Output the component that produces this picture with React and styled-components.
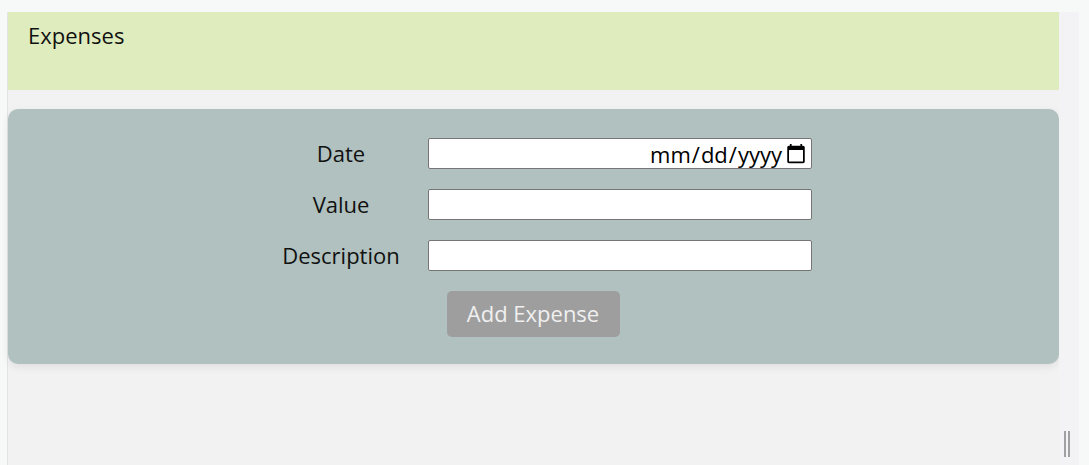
import React from "react";
import styled, { createGlobalStyle } from "styled-components";

const GlobalStyle = createGlobalStyle`
  body {
    margin: 0;
    background: #f7f8f8;
    font-family: "Open Sans", "Noto Sans", sans-serif;
  }
`;

const Frame = styled.div`
  padding: 12px 10px 0 7px;
`;

const Panel = styled.div`
  display: flex;
  min-height: calc(100vh - 12px);
  border-left: 1px solid #e3e4e4;
`;

const Main = styled.div`
  flex: 1;
  background: #f2f2f2;
`;

const Gutter = styled.div`
  width: 20px;
  background: #f3f3f5;
  display: flex;
  align-items: flex-end;
  justify-content: center;
  padding-bottom: 8px;
  box-sizing: border-box;
`;

const Grip = styled.div`
  width: 6px;
  height: 26px;
  border-left: 2px solid #a0a0a0;
  border-right: 2px solid #a0a0a0;
  box-sizing: border-box;
  margin-right: 4px;
`;

const Header = styled.div`
  background: #dfedbe;
  height: 78px;
  box-sizing: border-box;
  padding: 9px 20px;
  font-size: 22px;
  line-height: 28px;
  color: #111;
`;

const Card = styled.div`
  margin-top: 19px;
  background: #b0c1bf;
  border-radius: 10px;
  padding: 29px 0 27px;
  box-shadow: 0 3px 8px rgba(0, 0, 0, 0.08);
`;

const Form = styled.form`
  display: grid;
  grid-template-columns: 174px 384px;
  justify-content: center;
  align-items: center;
  row-gap: 20px;
  padding-right: 1px;
`;

const Label = styled.label`
  text-align: center;
  font-size: 22px;
  line-height: 28px;
  padding-bottom: 2px;
  color: #111;
`;

const Input = styled.input`
  height: 31px;
  box-sizing: border-box;
  border: 1px solid #767676;
  border-radius: 2px;
  background: #fff;
  font-family: inherit;
  font-size: 22px;
  text-align: ${(p) => (p.$right ? "right" : "left")};
  padding: 0 2px;
`;

const Button = styled.button`
  grid-column: 1 / -1;
  justify-self: center;
  width: 173px;
  height: 46px;
  padding: 0 0 3px;
  border: none;
  border-radius: 5px;
  background: #9e9e9e;
  color: #f0f0f0;
  font-family: inherit;
  font-size: 22px;
`;

export default function App() {
  return (
    <>
      <GlobalStyle />
      <Frame>
        <Panel>
          <Main>
            <Header>Expenses</Header>
            <Card>
              <Form onSubmit={(e) => e.preventDefault()}>
                <Label htmlFor="date">Date</Label>
                <Input id="date" type="date" $right />
                <Label htmlFor="value">Value</Label>
                <Input id="value" type="text" />
                <Label htmlFor="desc">Description</Label>
                <Input id="desc" type="text" />
                <Button type="submit" disabled>
                  Add Expense
                </Button>
              </Form>
            </Card>
          </Main>
          <Gutter>
            <Grip />
          </Gutter>
        </Panel>
      </Frame>
    </>
  );
}
